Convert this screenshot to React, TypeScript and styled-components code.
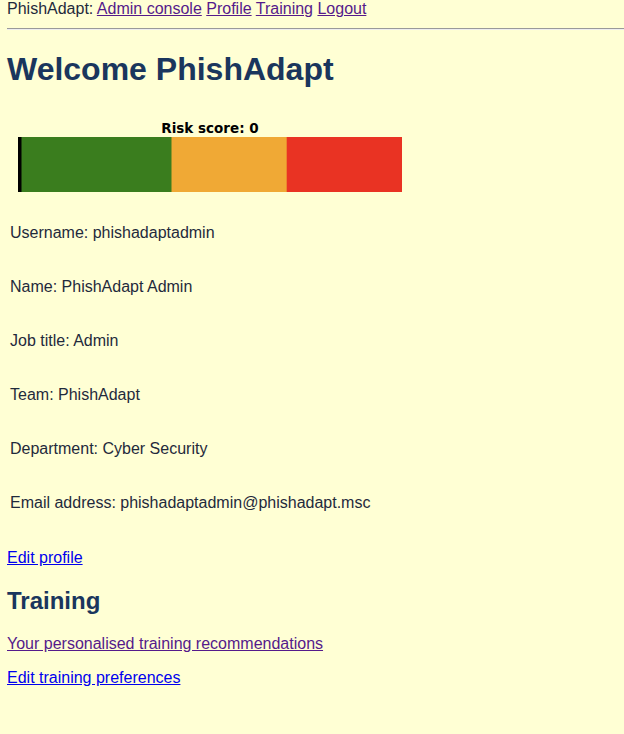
import React from "react";
import styled, { createGlobalStyle } from "styled-components";

const GlobalStyle = createGlobalStyle`
  html, body {
    margin: 0;
    padding: 0;
    background: #ffffd4;
  }
  body {
    font-family: "Liberation Sans", Arial, sans-serif;
    font-size: 16px;
    color: #1f2a3c;
    overflow: hidden;
  }
`;

const Page = styled.div`
  padding: 0 7px;
  min-height: 734px;
  box-sizing: border-box;
`;

const Nav = styled.nav`
  line-height: normal;
  white-space: nowrap;
`;

const Link = styled.a<{ $visited?: boolean }>`
  color: ${(p) => (p.$visited ? "#551a8b" : "#0000ee")};
  text-decoration: underline;
  cursor: pointer;
`;

const Rule = styled.hr`
  margin: 10px -7px 0 0;
  border: 0;
  border-top: 1px solid #9a9a9a;
  border-bottom: 1px solid #eeeeee;
  height: 0;
`;

const Title = styled.h1`
  font-size: 32px;
  font-weight: bold;
  color: #1a365d;
  margin: 21px 0;
  line-height: normal;
`;

const Chart = styled.svg`
  display: block;
  width: 420px;
  height: 100px;
`;

const InfoList = styled.div`
  display: flex;
  flex-direction: column;
  gap: 36px;
  margin-top: 15px;
  padding-left: 3px;
`;

const InfoLine = styled.div`
  line-height: 18px;
`;

const Para = styled.p<{ $top?: number }>`
  margin: ${(p) => (p.$top !== undefined ? `${p.$top}px` : "16px")} 0 16px;
  line-height: normal;
`;

const SubTitle = styled.h2`
  font-size: 24px;
  font-weight: bold;
  color: #1a365d;
  margin: 20px 0;
  line-height: normal;
`;

const LinkPara = styled.p`
  margin: 16px 0;
  line-height: normal;
`;

const RiskGauge: React.FC<{ score: number }> = ({ score }) => (
  <Chart viewBox="0 0 420 100">
    <text
      x={203}
      y={24}
      textAnchor="middle"
      fontFamily="'DejaVu Sans', sans-serif"
      fontWeight="bold"
      fontSize={13.5}
      fill="#000"
    >
      Risk score: {score}
    </text>
    <rect x={11} y={28} width={154} height={55} fill="#3a7d1e" />
    <rect x={164.5} y={28} width={115.5} height={55} fill="#f0a935" />
    <rect x={279.7} y={28} width={115.3} height={55} fill="#e93323" />
    <rect x={11} y={28} width={3.5} height={55} fill="#000" />
  </Chart>
);

const info = [
  "Username: phishadaptadmin",
  "Name: PhishAdapt Admin",
  "Job title: Admin",
  "Team: PhishAdapt",
  "Department: Cyber Security",
  "Email address: phishadaptadmin@phishadapt.msc",
];

export default function App() {
  return (
    <>
      <GlobalStyle />
      <Page>
        <Nav>
          PhishAdapt: <Link $visited>Admin console</Link> <Link $visited>Profile</Link>{" "}
          <Link $visited>Training</Link> <Link $visited>Logout</Link>
        </Nav>
        <Rule />
        <Title>Welcome PhishAdapt</Title>
        <RiskGauge score={0} />
        <InfoList>
          {info.map((t) => (
            <InfoLine key={t}>{t}</InfoLine>
          ))}
        </InfoList>
        <Para $top={37}>
          <Link>Edit profile</Link>
        </Para>
        <SubTitle>Training</SubTitle>
        <LinkPara>
          <Link $visited>Your personalised training recommendations</Link>
        </LinkPara>
        <LinkPara>
          <Link>Edit training preferences</Link>
        </LinkPara>
      </Page>
    </>
  );
}
